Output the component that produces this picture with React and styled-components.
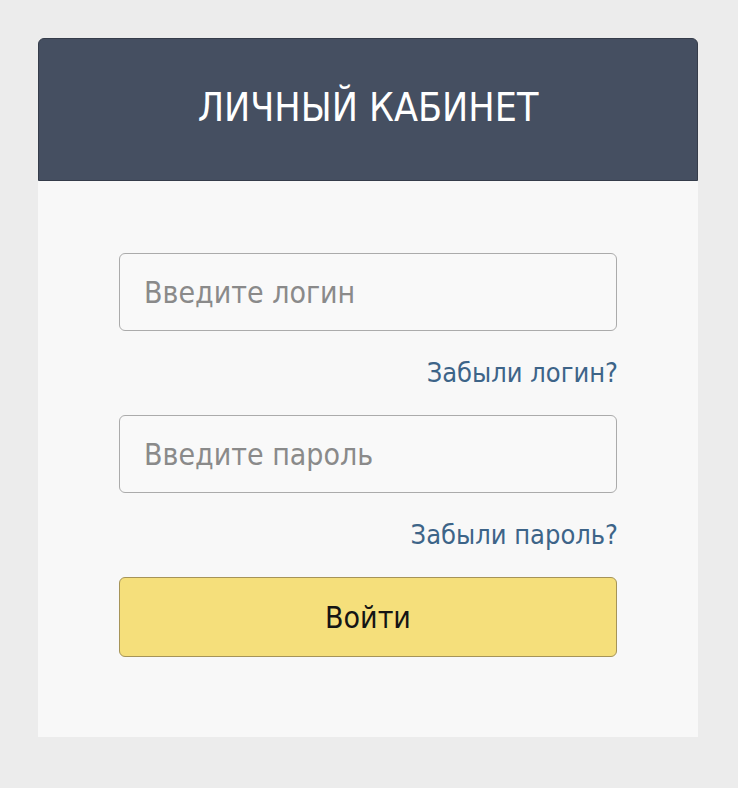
import styled, { createGlobalStyle } from 'styled-components';

const GlobalStyle = createGlobalStyle`
  body {
    margin: 0;
    background: #ececec;
    font-family: "DejaVu Sans Condensed", "DejaVu Sans", sans-serif;
  }
`;

const Page = styled.div`
  padding: 38px 40px 51px 38px;
`;

const Card = styled.div`
  width: 660px;
  background: #f8f8f8;
  border-radius: 6px 6px 0 0;
`;

const Header = styled.div`
  height: 143px;
  box-sizing: border-box;
  display: flex;
  align-items: center;
  justify-content: center;
  background: #454f61;
  border: 1px solid #353c4a;
  border-radius: 6px 6px 0 0;
  color: #fff;
  font-size: 39px;
  padding-bottom: 4px;
`;

const Form = styled.form`
  display: flex;
  flex-direction: column;
  align-items: flex-end;
  padding: 72px 81px 80px;
`;

const Field = styled.input`
  width: 100%;
  height: 78px;
  box-sizing: border-box;
  padding: 0 24px;
  background: #f9f9f9;
  border: 1px solid #ababab;
  border-radius: 6px;
  font-family: inherit;
  font-size: 30px;
  color: #333;
  outline: none;

  &::placeholder {
    color: #8a8a8a;
  }
`;

const Forgot = styled.a`
  margin: 27px -1px 27px 0;
  height: 30px;
  line-height: 30px;
  font-size: 27px;
  color: #3d6488;
  text-decoration: none;
`;

const Submit = styled.button`
  width: 100%;
  height: 80px;
  background: #f5df7b;
  border: 1px solid #a69458;
  border-radius: 6px;
  font-family: inherit;
  font-size: 30px;
  color: #141414;
  cursor: pointer;
`;

export default function App() {
  return (
    <>
      <GlobalStyle />
      <Page>
        <Card>
          <Header>ЛИЧНЫЙ КАБИНЕТ</Header>
          <Form onSubmit={e => e.preventDefault()}>
            <Field type="text" placeholder="Введите логин" />
            <Forgot href="#">Забыли логин?</Forgot>
            <Field type="password" placeholder="Введите пароль" />
            <Forgot href="#">Забыли пароль?</Forgot>
            <Submit type="submit">Войти</Submit>
          </Form>
        </Card>
      </Page>
    </>
  );
}
